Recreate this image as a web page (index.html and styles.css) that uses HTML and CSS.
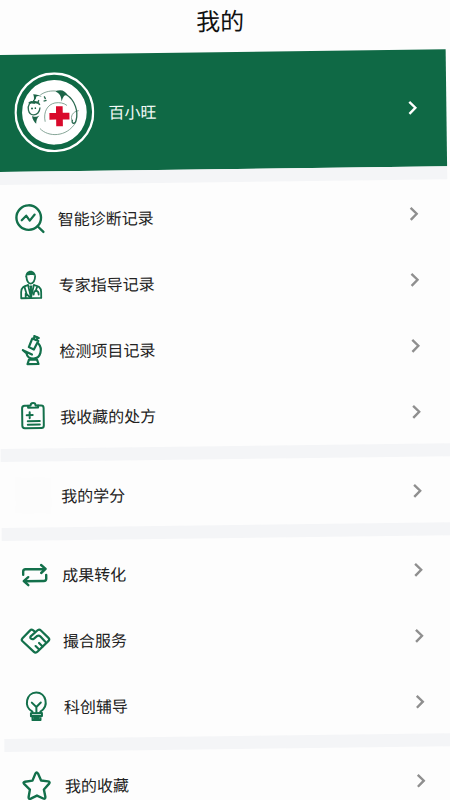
FILE: index.html
```html
<!DOCTYPE html>
<html lang="zh-CN">
<head>
  <meta charset="UTF-8" />
  <meta name="viewport" content="width=device-width, initial-scale=1.0"/>
  <title>我的</title>
  <link rel="stylesheet" href="styles.css">
</head>
<body>
  <svg class="defs" aria-hidden="true">
    <symbol id="arrow" viewBox="0 0 10 16"><path d="M2 2l6 6-6 6"/></symbol>
  </svg>

  <main class="screen">
    <h1 class="title">我的</h1>

    <a class="profile" href="#profile">
      <svg class="avatar" viewBox="0 0 240 240" aria-hidden="true">
        <circle class="ring" cx="120" cy="120" r="116.500"/>
        <circle class="disc" cx="120" cy="120" r="97"/>
        <g class="pig-thin">
          <path d="M78 68C92 57 112 54 131 57"/>
          <path d="M92 148C86 118 100 96 122 92c14-2 26 0 36 8"/>
          <path d="M76 168c24 27 80 28 107-16"/>
          <path d="M193 116c-18 2-26 17-20 30"/>
        </g>
        <g class="pig">
          <path d="M46 92c-8 12-5 33 10 35 12 1 20-8 21-22M44 94c10-6 26-5 33 3"/>
          <path d="M60 94l-2-12M70 91l4-8"/>
          <path d="M157 68c26 17 35 51 28 76-3 14-16 12-11-1"/>
          <path d="M90 72l4 8M88 86l9-2"/>
        </g>
        <g class="pig-fill">
          <path d="M124 58c14-8 30-4 37 13-9-4-14 0-19 17-1-16-6-25-18-30z"/>
          <path d="M53 130c4 3 14 4 22-1-8 7-10 16-10 25-6-7-12-15-12-24z"/>
          <path d="M41 92c6-7 11-8 15-6 8-2 16 0 22 8-8-3-15-4-22-1-6-2-10-2-15-1z"/>
          <path d="M57 65c9 0 20 3 26 9-8-4-14-4-17-1 0 6-3 10-8 13 2-7 2-14-1-21z"/>
          <circle cx="53" cy="108" r="3"/>
          <circle cx="63" cy="107" r="2.500"/>
        </g>
        <path class="cross" d="M125 102h20v20h20v20h-20v20h-20v-20h-20v-20h20z"/>
      </svg>
      <span class="name">百小旺</span>
      <svg class="arrow"><use href="#arrow"/></svg>
    </a>

    <nav class="group">
      <a class="row" href="#diagnosis">
        <svg class="icon" viewBox="0 0 36 36">
          <circle cx="17" cy="17" r="12.300"/>
          <path d="M26 26l5.500 5.500"/>
          <path class="mid" d="M10 19.500l4.500-4.500 3.500 5 5-6"/>
        </svg>
        <span class="label">智能诊断记录</span>
        <svg class="arrow"><use href="#arrow"/></svg>
      </a>
      <a class="row" href="#expert">
        <svg class="icon thin" viewBox="0 0 36 36">
          <path class="solid" d="M13 11c-1-9 11-9.500 10.500 0-1-2-2-2.500-5.200-2.500S14 9 13 11z"/>
          <path d="M14 10c0 4 2 7 4.300 7s4.300-3 4.300-7M15.500 18.500c-4 1-7 2-7 7V31.500h20v-6c0-5-3-6-7-7"/>
          <path d="M15.500 18.500L18.300 31l3-12.500M12 20.500l2 7 4 4M24.500 20.500l-1.500 4M13 27v4"/>
          <path d="M21 28c0-5 5-5 5 0M18.300 20v7"/>
          <path class="solid" d="M16.500 19h3.500l-1 2.500 1 5-1.700 3-1.500-3 .7-5z"/>
        </svg>
        <span class="label">专家指导记录</span>
        <svg class="arrow"><use href="#arrow"/></svg>
      </a>
      <a class="row" href="#testing">
        <svg class="icon mid" viewBox="0 0 36 36">
          <path d="M19 6l6 2.500-4.500 8.500-5-2.500zM21 3.500l4.500 2M20.500 6l1-2M23.500 7l1-2"/>
          <path d="M25 11c4.500 5 2.500 15-5 15-4.500 0-6.500-2.500-7-5.500l-3.500-3M9.500 17.500l9 4.500"/>
          <path d="M15.500 27h8l1.500 4.500H14z"/>
        </svg>
        <span class="label">检测项目记录</span>
        <svg class="arrow"><use href="#arrow"/></svg>
      </a>
      <a class="row" href="#prescriptions">
        <svg class="icon fine" viewBox="0 0 36 36">
          <path d="M14 7h-3.500q-2.500 0-2.500 2.500v17.500q0 2.500 2.500 2.500h16.500q2.500 0 2.500-2.500V9.500q0-2.500-2.500-2.500H24"/>
          <path d="M14 9V7h2.500q0-2.500 2.500-2.500t2.500 2.500H24v2z"/>
          <path d="M12.500 16.500h6M15.500 13.500v6M13.500 22.500h12M13.500 26h12"/>
        </svg>
        <span class="label">我收藏的处方</span>
        <svg class="arrow"><use href="#arrow"/></svg>
      </a>
    </nav>

    <nav class="group">
      <a class="row" href="#credits">
        <span class="icon blank"></span>
        <span class="label">我的学分</span>
        <svg class="arrow"><use href="#arrow"/></svg>
      </a>
    </nav>

    <nav class="group">
      <a class="row" href="#results">
        <svg class="icon" viewBox="0 0 36 36">
          <path d="M7 18v-3q0-2.500 2.500-2.500h19.500M25 8.500l4.500 4-4.500 4"/>
          <path d="M30 18.500V22q0 2.500-2.500 2.500H8M12 20.500l-4.500 4 4.500 4"/>
        </svg>
        <span class="label">成果转化</span>
        <svg class="arrow"><use href="#arrow"/></svg>
      </a>
      <a class="row" href="#matching">
        <svg class="icon mid" viewBox="0 0 36 36">
          <path d="M18 9l-2-1.500q-1.500-1-3 .5L5.500 15.500q-1.500 1.500 0 3L16.500 29q2 2 4 0l11-10.500q1.500-1.500 0-3L24 8q-1.500-1.500-3-.5l-7 6c-2 2 1 4 3 2.500l3-2.500q2-1 3.500.5l4.500 5"/>
          <path d="M22 20.500l3.500 3.500M18.500 23.500l3.500 3.500"/>
        </svg>
        <span class="label">撮合服务</span>
        <svg class="arrow"><use href="#arrow"/></svg>
      </a>
      <a class="row" href="#coaching">
        <svg class="icon fine" viewBox="0 0 36 36">
          <path d="M14.500 24.500v-1.500c-9-5-6-19 4-19s13 14 4 19v1.500"/>
          <path d="M13 24.500h11v3H13zM14.500 27.500h8v4h-8z"/>
          <path d="M14 14l4.500 4.500 4.500-4.500M18.500 18.500v6"/>
          <path d="M16 29.500h5"/>
        </svg>
        <span class="label">科创辅导</span>
        <svg class="arrow"><use href="#arrow"/></svg>
      </a>
    </nav>

    <nav class="group">
      <a class="row" href="#favorites">
        <svg class="icon" viewBox="0 0 36 36">
          <path d="M16.700 6q1.300-2 2.600 0l3 7 7 1q2.500.5.800 2.500l-5.100 5.500 1.400 7.500q0 2.500-2.200 1.500L18 28 11.800 31q-2.200 1-2.200-1.500l1.400-7.500L5.500 16.500q-1.800-2 .7-2.500l7.500-1z"/>
        </svg>
        <span class="label">我的收藏</span>
        <svg class="arrow"><use href="#arrow"/></svg>
      </a>
    </nav>
  </main>
</body>
</html>
```

FILE: styles.css
```css
body {
  margin: 0;
  height: 100vh;
  overflow: hidden;
  background: #fdfdfd;
  color: #222;
  font-family: "Noto Sans CJK SC", sans-serif;
}
.defs {
  position: absolute;
  width: 0;
  height: 0;
}
/* the whole screen leans slightly to the left */
.screen {
  transform: rotate(-0.72deg);
  transform-origin: 0 50vh;
}
.title {
  margin: 0;
  height: 55px;
  line-height: 46px;
  font-size: 24px;
  font-weight: 400;
  text-align: center;
  color: #111;
}
.profile, .row {
  display: flex;
  align-items: center;
  box-sizing: border-box;
  padding: 0 29px 0 14px;
  font-size: 16px;
  line-height: 24px;
  color: inherit;
  text-decoration: none;
}
.profile {
  height: 117px;
  gap: 14px;
  padding-bottom: 2px;
  padding-left: 18px;
  background: #0f6945;
  color: #f2faf6;
}
.row {
  height: 66px;
  gap: 10px;
  padding-top: 2px;
}
.group {
  border-top: 13px solid #f4f5f7;
}
.name, .label {
  flex: 1;
}
.avatar {
  width: 80px;
  height: 80px;
}
.icon {
  width: 36px;
  height: 36px;
  fill: none;
  stroke: #13704b;
  stroke-width: 2.4;
  stroke-linecap: round;
  stroke-linejoin: round;
}
.mid {
  stroke-width: 2.2;
}
.fine {
  stroke-width: 2;
}
.thin {
  stroke-width: 1.8;
}
.solid {
  fill: #13704b;
  stroke: none;
}
.blank {
  background: #fcfcfc;
}
.arrow {
  width: 10px;
  height: 16px;
  fill: none;
  stroke: #8f8f8f;
  stroke-width: 2.4;
}
.profile .arrow {
  stroke: #fff;
}
.ring {
  fill: none;
  stroke: #fff;
  stroke-width: 7;
}
.disc {
  fill: #fff;
}
.pig, .pig-thin {
  fill: none;
  stroke: #2c6b52;
  stroke-width: 4;
}
.pig-thin {
  stroke: #6f9484;
  stroke-width: 2.5;
}
.pig-fill {
  fill: #1c6548;
}
.cross {
  fill: #d9092b;
}
```
